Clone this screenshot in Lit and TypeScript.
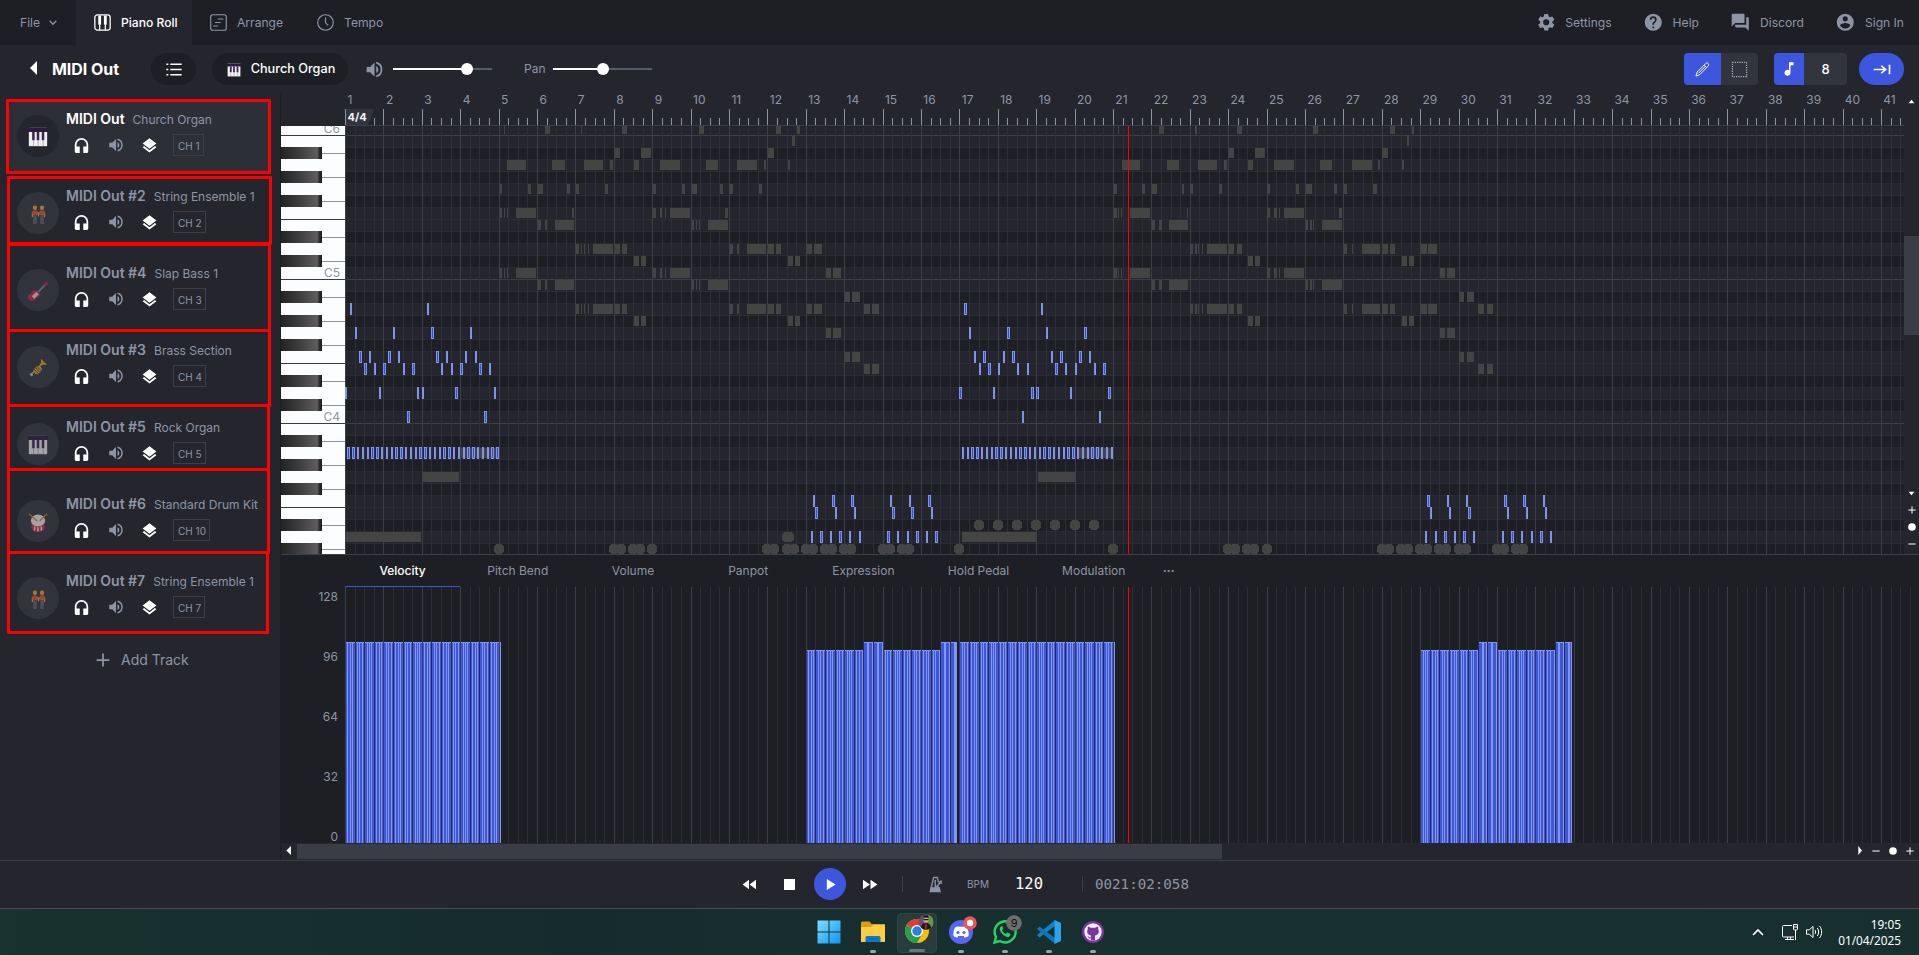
import { LitElement, html, css, svg } from "lit";
import { customElement } from "lit/decorators.js";

const BAR = 38.4;
const BEAT = 9.6;
const EIGHTH = 4.8;
const ROW = 12;
const BLACK_ROWS = [1, 3, 5, 8, 10];
const r = Math.round;

type Span = [number, number];

// Notes of the other tracks, [start, end] in units of 1/2.8 px, by key row.
const PHRASE_A: Span[] = [[447, 454], [459, 462], [467, 470], [493, 549], [875, 885], [896, 902], [910, 913], [924, 980]];
const PHRASE_B: Span[] = [[553, 563], [574, 580], [602, 655], [985, 991], [996, 1000], [1005, 1008], [1030, 1086]];
const PHRASE_C: Span[] = [
  [660, 669], [675, 678], [683, 686], [694, 697], [708, 764], [769, 784], [790, 804],
  [1090, 1100], [1112, 1117], [1140, 1193], [1198, 1215], [1221, 1235], [1307, 1322], [1327, 1350],
];
const PHRASE_D: Span[] = [[823, 837], [843, 857], [1254, 1268], [1274, 1288]];
const GHOSTS: [number, Span[]][] = [
  [-1, [[459, 462], [574, 588], [675, 678], [790, 804], [1005, 1019], [1221, 1235], [1280, 1288]]],
  [0, [[1266, 1274]]],
  [1, [[769, 784], [843, 871], [1198, 1215]]],
  [2, [[468, 521], [594, 630], [683, 736], [756, 764], [823, 837], [896, 952], [1025, 1058], [1112, 1168], [1187, 1193], [1254, 1260]]],
  [4, [[447, 454], [526, 535], [553, 568], [636, 644], [660, 669], [742, 750], [875, 885], [957, 966], [985, 1000], [1064, 1072], [1090, 1100], [1173, 1182]]],
  [6, [...PHRASE_A, [650, 655], [1078, 1086]]],
  [7, PHRASE_B],
  [9, PHRASE_C],
  [10, PHRASE_D],
  [11, [...PHRASE_A, [1361, 1375], [1380, 1403]]],
  [12, PHRASE_B],
  [13, [[1413, 1428], [1434, 1456]]],
  [14, [...PHRASE_C, [1467, 1484], [1490, 1509]]],
  [15, PHRASE_D],
  [16, [[1361, 1375], [1380, 1403]]],
  [18, [[1413, 1428], [1434, 1456]]],
  [19, [[1467, 1484], [1490, 1509]]],
];
const LONG_GHOSTS: [number, number, number][] = [
  [33, 1, 76], [28, 78, 114], [26, 116, 152],
  [33, 617, 691], [28, 693, 730], [26, 732, 768],
];

// Notes of the selected track, start in sixteenths (4.8 px), by key row.
const MELODY: [number, number[]][] = [
  [14, [1, 17]],
  [16, [2, 10, 18, 26]],
  [18, [3, 5, 9, 11, 19, 21, 25, 27]],
  [19, [4, 6, 8, 12, 14, 20, 22, 24, 28, 30]],
  [21, [0, 7, 15, 16, 23, 31]],
  [23, [13, 29]],
  [26, Array.from({ length: 32 }, (_, i) => i + 0.5)],
  [30, [97.5, 101.5, 105.5, 113.5, 117.5, 121.5]],
  [31, [98, 102, 106, 114, 118, 122]],
  [33, [97, 99, 101, 103, 105, 107, 113, 115, 117, 119, 121, 123]],
];

const DRUM_PAIRS = [7, 7.5, 11, 11.5, 12, 12.5, 13, 14, 14.5];
const WIDTH = 1574;

const lines = (top: number, h: number, w: number) => {
  const out = [];
  for (let i = 0; i * BEAT < w; i++)
    out.push(svg`<rect x=${r(i * BEAT)} y=${top} width="1" height=${h} fill=${i % 4 ? "#2d2f37" : "#3c3f48"}/>`);
  return out;
};

const P: Record<string, unknown> = {
  file: svg`<path d="M4 8l8 8 8-8" fill="none" stroke="currentColor" stroke-width="3"/>`,
  piano: svg`<g fill="none" stroke="currentColor" stroke-width="1.8"><rect x="1.2" y="1.2" width="21.6" height="21.6" rx="3.6"/><path d="M8 15v8M16 15v8"/></g><path d="M6 2h4v13H6zM14 2h4v13h-4z" fill="currentColor"/>`,
  arrange: svg`<g fill="none" stroke="currentColor" stroke-width="1.6"><rect x="1" y="1" width="22" height="22" rx="3"/><path d="M11 7h8M7 12h8M4.500 17h7"/></g>`,
  clock: svg`<g fill="none" stroke="currentColor" stroke-width="1.6"><circle cx="12" cy="12" r="11"/><path d="M12 5v7.500l4 3.500"/></g>`,
  gear: svg`<path fill="currentColor" d="M19.140 12.940c.040-.3.060-.61.060-.94s-.020-.64-.07-.94l2.030-1.580a.49.49 0 0 0 .12-.61l-1.920-3.320a.49.49 0 0 0-.59-.22l-2.390.96a7 7 0 0 0-1.620-.94l-.36-2.540a.48.48 0 0 0-.48-.41h-3.840c-.24 0-.43.17-.47.41l-.36 2.540c-.59.24-1.130.57-1.620.94l-2.390-.96a.48.48 0 0 0-.59.22L2.740 8.870c-.12.21-.08.47.12.61l2.030 1.580c-.05.3-.09.63-.09.94s.020.64.07.94l-2.030 1.580a.49.49 0 0 0-.12.61l1.920 3.320c.12.22.37.29.59.22l2.390-.96c.5.38 1.030.7 1.620.94l.36 2.540c.05.24.24.41.48.41h3.840c.24 0 .44-.17.47-.41l.36-2.540a7 7 0 0 0 1.620-.94l2.390.96c.22.08.47 0 .59-.22l1.920-3.320a.48.48 0 0 0-.12-.61zM12 15.600a3.600 3.600 0 1 1 0-7.200 3.600 3.600 0 0 1 0 7.200z"/>`,
  help: svg`<path fill="currentColor" d="M12 2a10 10 0 1 0 0 20 10 10 0 0 0 0-20zm1 17h-2v-2h2zm2.070-7.750-.9.920C13.450 12.900 13 13.500 13 15h-2v-.5c0-1.100.45-2.100 1.170-2.830l1.240-1.260c.37-.36.59-.86.59-1.410a2 2 0 1 0-4 0H8a4 4 0 1 1 8 0c0 .88-.36 1.680-.93 2.250z"/>`,
  chat: svg`<path fill="currentColor" d="M21 6h-2v9H6v2c0 .55.45 1 1 1h11l4 4V7c0-.55-.45-1-1-1zm-4 6V3c0-.55-.45-1-1-1H3c-.55 0-1 .45-1 1v14l4-4h10c.55 0 1-.45 1-1z"/>`,
  user: svg`<path fill="currentColor" d="M12 2a10 10 0 1 0 0 20 10 10 0 0 0 0-20zm0 3a3 3 0 1 1 0 6 3 3 0 0 1 0-6zm0 14.200a7.200 7.200 0 0 1-6-3.220c.030-1.990 4-3.080 6-3.080s5.970 1.090 6 3.080a7.200 7.200 0 0 1-6 3.220z"/>`,
  list: svg`<path d="M6.500 4.500h17v2h-17zM6.500 11.500h17v2h-17zM6.500 18.500h17v2h-17zM.5 4.500h3v2h-3zM.5 11.500h3v2h-3zM.5 18.500h3v2h-3z" fill="currentColor"/>`,
  volume: svg`<path fill="currentColor" d="M3 9v6h4l5 5V4L7 9zm13.500 3A4.500 4.500 0 0 0 14 7.970v8.050c1.480-.73 2.500-2.250 2.500-4.020zM14 3.230v2.060a7 7 0 0 1 0 13.420v2.060a9 9 0 0 0 0-17.540z"/>`,
  phones: svg`<path fill="currentColor" d="M12 1.500a9.500 9.500 0 0 0-9.500 9.500v9c0 1.400 1.100 2.500 2.500 2.500h4.500V13.500h-4.500V11a7 7 0 0 1 14 0v2.500h-4.500v9H19c1.400 0 2.500-1.100 2.500-2.500v-9A9.500 9.500 0 0 0 12 1.500z"/>`,
  layers: svg`<path fill="currentColor" d="M12 19.500L3.300 12.800 1 14.600l11 8.600 11-8.600-2.300-1.800zM12 17l11-8.400L12 .2 1 8.600z"/>`,
  pencil: svg`<g fill="none" stroke="currentColor" stroke-width="1.500" stroke-linejoin="round"><path d="M1.500 22.500l2-6.500L17 2.500c1.500-1.500 3-1.300 4 0s1.300 2.500 0 4L8 20z"/><path d="M14.500 5l4.500 4.500M5.500 18L17 6.500"/></g>`,
  marquee: svg`<rect x="2" y="2" width="20" height="20" fill="none" stroke="#a9afbc" stroke-width="1.700" stroke-dasharray="1.700 1.630"/>`,
  note: svg`<path fill="currentColor" d="M12 3v10.550A4 4 0 1 0 14 17V7h4V3z"/>`,
  jump: svg`<path d="M1 12h16M11 6l6 6-6 6M22 4.500v15" fill="none" stroke="currentColor" stroke-width="2.200"/>`,
  plus: svg`<path d="M12 1v22M1 12h22" fill="none" stroke="currentColor" stroke-width="3"/>`,
  minus: svg`<path d="M1 12h22" fill="none" stroke="currentColor" stroke-width="3"/>`,
  dot: svg`<circle cx="12" cy="12" r="11.500" fill="currentColor"/>`,
  up: svg`<path d="M2 18L12 6l10 12z" fill="currentColor"/>`,
  down: svg`<path d="M2 6l10 12L22 6z" fill="currentColor"/>`,
  left: svg`<path d="M18 0L4 12l14 12z" fill="currentColor"/>`,
  right: svg`<path d="M7 0l11 12L7 24z" fill="currentColor"/>`,
  rew: svg`<path d="M12 4.500v15L1 12zM24 4.500v15L13 12z" fill="currentColor"/>`,
  ff: svg`<path d="M0 4.500v15L11 12zM12 4.500v15L23 12z" fill="currentColor"/>`,
  stop: svg`<path d="M0 0h24v24H0z" fill="currentColor"/>`,
  play: svg`<path d="M4 0v24l19-12z" fill="currentColor"/>`,
  metro: svg`<path d="M9 2h6l1.800 7M9 2L4.500 19M16 14.500l1.500 5M11.500 17V7l.5-1.500M12 17L22 6.500M18.500 7l3.500 4" fill="none" stroke="currentColor" stroke-width="2.200"/><path d="M4 16h15l1.600 7H2.400z" fill="currentColor"/>`,
  keys: svg`<path d="M1 1h22v22H1z" fill="#f1eef0"/><path d="M0 1h24v5H0z" fill="#2f1b40"/><path d="M5 6h3v10H5zM10.500 6h3v10h-3zM16.500 6h3v10h-3z" fill="#3b2450"/><path d="M6.200 16h.8v7h-.8zM11.700 16h.8v7h-.8zM17.700 16h.8v7h-.8z" fill="#9a93a0"/>`,
  people: svg`<g fill="#f2a33a"><circle cx="7" cy="3.500" r="3"/><circle cx="17" cy="3.500" r="3"/><path d="M2.500 9h2v6h-2zM19.500 9h2v6h-2zM9.500 9L12 15.500 14.500 9z"/></g><path d="M3.500 7h7v6h-7zM13.500 7h7v6h-7z" fill="#e0532c"/><path d="M4.500 13h5v11h-5zM14.500 13h5v11h-5z" fill="#5c6470"/>`,
  guitar: svg`<path d="M10 15L21 3" stroke="#7a7f98" stroke-width="2.400"/><path d="M18 3.500L21.500-.5 25 2l-3.500 3.500z" fill="#c2204f"/><path d="M1.500 22.500c-3-3-1.500-7 2-7 .5-4 4.500-6.500 7-4.500l3 3c2 2.500 0 5.500-4 6.500-1 4-5 4.500-8 2z" fill="#d3204d"/><path d="M4.500 18l5.500-5.500 3 3-5.500 5.500z" fill="#e2d6dd"/>`,
  trumpet: svg`<g transform="rotate(-45 12 12)"><path d="M-1 10.500h18c3 0 5-1.500 7-4.500h1v11.500h-1c-2-3-4-4.500-7-4.500H-1z" fill="#e5a02d"/><rect x="3" y="9" width="13" height="9.500" rx="4" fill="#e5a02d"/><path d="M6.500 7v12M9.500 7v12M12.500 7v12" stroke="#5d4423" stroke-width="1.300"/><path d="M-3.500 9.500h3v5h-3z" fill="#c9c4bd"/></g>`,
  drum: svg`<path d="M4 9h16v9c0 4-3 6-8 6s-8-2-8-6z" fill="#cf2147"/><path d="M7 17h2v5H7zM11 18h2v5h-2zM15 17h2v5h-2z" fill="#f1dede"/><ellipse cx="12" cy="9.500" rx="8.500" ry="7.500" fill="#f2ece6"/><path d="M1 1l10 9M23 1l-9 9" stroke="#c9823a" stroke-width="1.600"/>`,
};

const icon = (name: string, w: number, h = w) =>
  html`<svg class="ic" width=${w} height=${h} viewBox="0 0 24 24" preserveAspectRatio="none">${P[name]}</svg>`;

const TRACKS = [
  { name: "MIDI Out", inst: "Church Organ", ch: 1, pic: "keys", on: true },
  { name: "MIDI Out #2", inst: "String Ensemble 1", ch: 2, pic: "people" },
  { name: "MIDI Out #4", inst: "Slap Bass 1", ch: 3, pic: "guitar" },
  { name: "MIDI Out #3", inst: "Brass Section", ch: 4, pic: "trumpet" },
  { name: "MIDI Out #5", inst: "Rock Organ", ch: 5, pic: "keys" },
  { name: "MIDI Out #6", inst: "Standard Drum Kit", ch: 10, pic: "drum" },
  { name: "MIDI Out #7", inst: "String Ensemble 1", ch: 7, pic: "people" },
];

// Annotation frames over the track list: x, y, width, height.
const FRAMES = [
  [6, 99, 265, 75], [7, 176, 265, 69], [7, 243, 264, 89], [7, 329, 264, 78],
  [7, 404, 263, 67], [7, 468, 263, 86], [7, 551, 262, 83],
];

@customElement("app-root")
export class AppRoot extends LitElement {
  static styles = css`
    :host { display: flex; flex-direction: column; width: 1919px; height: 955px; overflow: hidden; position: relative;
      background: #25262d; color: #8d95a5; font: 12px/16px Inter, "Open Sans", sans-serif; }
    * { box-sizing: border-box; }
    .ic { display: block; flex: none; overflow: visible; }
    .row { display: flex; align-items: center; }
    .white { color: #fff; }
    .top { height: 45px; flex: none; background: #1e1f24; font-size: 12.100px; }
    .file { width: 76px; padding-left: 20px; gap: 8px; }
    .tab { height: 45px; gap: 10px; padding-left: 18px; margin-right: 16px; }
    .tab.on { background: #25262d; color: #fff; width: 116px; font-weight: 500; margin-right: 0; }
    .tab b { font-weight: inherit; }
    .links { margin-left: auto; padding-right: 15px; gap: 31.500px; }
    .links .row { gap: 9px; }
    .tools { height: 48px; flex: none; padding-left: 28px; }
    .back { width: 24px; }
    .back .ic { margin-top: -3px; }
    .ttl { font-size: 16px; font-weight: 700; width: 99px; letter-spacing: -0.050px; }
    .pill { height: 32px; border-radius: 16px; background: #1e1f24; justify-content: center; color: #fff; }
    .listb { width: 45px; margin-right: 16px; }
    .inst { width: 136px; gap: 10px; font-size: 12.700px; margin-right: 16px; padding-left: 2px; font-weight: 500; }
    .inst .ic { margin-top: 2px; }
    .slider { width: 99px; height: 12px; }
    .fill { height: 2px; background: #fff; }
    .knob { width: 12px; height: 12px; border-radius: 50%; background: #fff; margin: 0 -6px; z-index: 1; }
    .rest { height: 2px; flex: 1; background: #535b6d; }
    .pan { margin: 0 8px 0 32px; width: 21px; font-size: 12px; }
    .edit { margin-left: auto; padding-right: 15px; }
    .sq { height: 32px; justify-content: center; background: #32353e; }
    .blue { background: #3c57dd; color: #fff; }
    .main { display: flex; flex: none; height: 767px; }
    .side { width: 281px; padding: 9px 10px 0 9px; border-right: 1px solid #1e1f24; flex: none; }
    .track { display: flex; height: 69px; margin-bottom: 8px; padding: 0 0 0 8px; border: 1px solid transparent; border-radius: 6px; }
    .track.on { background: #2d2f37; border-color: #31353d; }
    .disc { width: 42px; height: 42px; border-radius: 50%; background: #31343c; margin: 12px 7px 0 -1px; display: flex; align-items: center; justify-content: center; }
    .disc .ic { opacity: .6; margin-top: 2px; }
    .on .disc { background: #25262d; }
    .on .disc .ic { opacity: 1; }
    .info { flex: 1; white-space: nowrap; padding-top: 8px; }
    .nm { font-size: 14px; font-weight: 600; margin-right: 8px; }
    .on .nm { color: #fff; }
    .in { font-size: 12px; }
    .ctl { margin-top: 6px; height: 22px; padding-left: 7px; }
    .ctl .ic { margin-right: 17px; }
    .ch { height: 22px; border: 1px solid #3a3f4a; font-size: 10px; padding: 3px 3px 0 4px; line-height: 16px; margin-left: -1px; }
    .add { padding: 11px 0 0 87px; gap: 11px; font-size: 14px; }
    .right { flex: 1; min-width: 0; }
    .up { display: flex; height: 461px; }
    .keys { width: 64px; flex: none; padding-top: 33px; }
    .cols { width: 1559px; flex: none; overflow: hidden; }
    .ruler { height: 33px; border-bottom: 1px solid #3a3f4a; overflow: hidden; }
    .nums { display: flex; height: 16px; }
    .nums span { width: 38.400px; flex: none; padding-left: 2.500px; font-size: 12px; line-height: 14px; }
    .ticks { display: block; }
    .roll, .kb, .vel { display: block; }
    .vs { width: 15px; display: flex; flex-direction: column; align-items: center; padding-top: 4.500px; height: 461px; color: #fff; }
    .vthumb { width: 15px; height: 99px; background: #3a3d45; margin: 131.500px 0 155px; flex: none; }
    .low { background: #1e1f24; border-top: 1px solid #3a3f4a; height: 289px; }
    .tabs { display: flex; height: 32px; padding-left: 64px; }
    .tabs div { width: 115.200px; text-align: center; line-height: 32px; border-bottom: 1px solid transparent; }
    .tabs .sel { color: #fff; border-color: #3c57dd; font-weight: 500; }
    .tabs .more { width: 30px; font-size: 6.500px; padding-left: 5px; letter-spacing: 0.300px; }
    .velrow { display: flex; }
    .axis { width: 64px; padding: 2px 7px 0 0; text-align: right; height: 256px; }
    .axis div { height: 60px; }
    .axis span { display: block; height: 14px; }
    .hs { height: 17px; display: flex; align-items: center; color: #fff; background: #25262d; padding: 0 0 2px 4px; }
    .hthumb { width: 925px; height: 15px; background: #3a3d45; margin: 2px 634px 0 4px; }
    .bar { height: 48px; flex: none; border-top: 1px solid #3a3f4a; justify-content: flex-start; padding: 0 0 1px 742px; color: #fff; }
    .playb { width: 32px; height: 32px; border-radius: 50%; justify-content: center; margin: 0 17px; }
    .sep { width: 1px; height: 16px; background: #3a3f4a; }
    .dim { color: #8d95a5; }
    .mono { font-family: "DejaVu Sans Mono", monospace; }
    .task { flex: 1; background: linear-gradient(90deg, #17322f, #162b2d 30%, #182f30 50%, #17302f); border-top: 1px solid #41504f; padding-left: 809px; color: #fff; }
    .app { width: 40px; height: 40px; margin: 1px 4px 0 0; display: flex; flex-direction: column; align-items: center; justify-content: flex-end; border-radius: 4px; }
    .app.cur { background: #263c3d; border: 1px solid #304646; }
    .app i { width: 6px; height: 3px; border-radius: 2px; background: #9aa5a5; margin-top: 3.500px; }
    .app.cur i { width: 16px; background: #6d7677; }
    .app i.none { background: none; }
    .tray { margin-left: auto; padding-right: 18px; gap: 8px; }
    .clk { font: 11.800px/16px "Noto Sans", "Open Sans", sans-serif; text-align: right; width: 70px; white-space: nowrap; }
    .frame { position: absolute; border: 3px solid #f00; border-radius: 1px; }
    text { font-family: Inter, sans-serif; }
  `;

  private ticks() {
    const out = [];
    for (let i = 0; i * BEAT < 1559; i++) {
      const h = i % 4 ? 7 : 16;
      out.push(svg`<rect x=${r(i * BEAT)} y=${16 - h} width="1" height=${h} fill="#8d95a5"/>`);
    }
    return html`<svg class="ticks" width="1559" height="16">${out}
      ${svg`<path d="M1 0h28l-6 16H1z" fill="#32353e"/><text x="2.500" y="12.300" font-size="11" font-weight="700" fill="#f2f3f5">4/4</text>`}</svg>`;
  }

  private keyboard() {
    const out = [];
    for (let k = -1; k < 35; k++) {
      const y = 9 + k * ROW;
      const n = (k + 12) % 12;
      if (BLACK_ROWS.includes(n))
        out.push(svg`<rect x="41" y=${y + 6} width="23" height="1" fill="#8f929b"/><rect x="0" y=${y} width="41" height="12" fill="url(#bk)"/>`);
      if (n === 6 || n === 11)
        out.push(svg`<rect x="0" y=${y + 12} width="64" height="1" fill="#3a3b42"/>`);
      if (n === 11)
        out.push(svg`<text x="59" y=${y + 10} font-size="12" text-anchor="end" fill="#8d95a5">C${k < 0 ? 6 : k < 12 ? 5 : 4}</text>`);
    }
    return html`<svg class="kb" width="64" height="428"><defs><linearGradient id="bk" gradientUnits="userSpaceOnUse" x1="0" y1="0" x2="41" y2="0"><stop offset="0" stop-color="#222"/><stop offset="0.400" stop-color="#3c3b3b"/><stop offset="0.880" stop-color="#5e5c5c"/><stop offset="0.940" stop-color="#2c2b2c"/><stop offset="1" stop-color="#1c1c1e"/></linearGradient></defs>
      <rect width="64" height="428" fill="#fcfdff"/>${out}</svg>`;
  }

  private roll() {
    const g = [];
    const top = (k: number) => 9 + k * ROW;
    for (let k = -1; k < 35; k++) {
      if (BLACK_ROWS.includes((k + 12) % 12)) g.push(svg`<rect x="0" y=${top(k)} width="1559" height="12" fill="#1e1f24"/>`);
    }
    for (let k = 0; k < 35; k++) {
      g.push(svg`<rect x="0" y=${top(k)} width="1559" height="1" fill=${k % 12 ? "#2a2b32" : "#3a3f4a"}/>`);
    }
    g.push(...lines(0, 428, 1559));
    const ghost = (k: number, a: number, b: number) =>
      g.push(svg`<rect x=${a} y=${top(k) + 1} width=${Math.max(1, b - a)} height="10" fill="#444"/>`);
    for (const off of [0, 16 * BAR])
      for (const [k, list] of GHOSTS)
        for (const [a, b] of list) ghost(k, r(a / 2.8 - 5 + off), r(b / 2.8 - 5 + off));
    for (const [k, a, b] of LONG_GHOSTS) ghost(k, a, b);
    const drum = (k: number, x: number) => {
      const c = r(x);
      const y = top(k);
      g.push(svg`<path d="M${c - 2.500} ${y + 1}h5l2.500 2.500v5l-2.500 2.500h-5l-2.500-2.500v-5z" fill="#444"/>`);
    };
    for (const off of [0, 16 * BAR]) {
      for (const b of DRUM_PAIRS) {
        drum(34, b * BAR + off);
        drum(34, b * BAR + 7 + off);
      }
      drum(34, 8 * BAR + off);
      drum(34, 4 * BAR + off);
    }
    drum(34, 16 * BAR);
    drum(33, 11.5 * BAR);
    drum(33, 11.5 * BAR + 2);
    for (let i = 0; i < 7; i++) drum(32, 132 * EIGHTH + i * 19.2);
    for (const [k, list] of MELODY)
      for (const off of [0, 128])
        for (const s of list) {
          const a = r((s + off) * EIGHTH);
          const b = r((s + off) * EIGHTH + 2.4);
          g.push(svg`<rect x=${a} y=${top(k)} width=${b - a} height="12" fill="#8093ea"/>`);
          if (b - a > 2) g.push(svg`<rect x=${a + 1} y=${top(k) + 1} width="1" height="10" fill="#3550d0"/>`);
        }
    g.push(svg`<rect x="783" y="0" width="1" height="428" fill="#f00"/>`);
    return html`<svg class="roll" width="1559" height="428" shape-rendering="crispEdges">${g}</svg>`;
  }

  private velocity() {
    const g: unknown[] = [];
    const bar = (x0: number, x1: number, y: number) => {
      const a = r(x0);
      const b = r(x1);
      g.push(svg`<rect x=${a} y=${y} width=${b - a} height=${256 - y} fill="#8296ee"/><rect x=${a + 1} y=${y + 1} width=${b - a - 2} height=${255 - y} fill="#3c57dd"/>`);
    };
    const dense = (start: number, count: number, y: number) => {
      for (let i = 0; i < count; i++) bar(start + i * 2.4, start + i * 2.4 + 4.8, y);
    };
    const wide = (start: number, count: number) => {
      for (let i = 0; i < count; i++) bar(start + i * 4.8, start + i * 4.8 + 4.8, 55);
    };
    dense(0, 64, 55);
    for (const off of [12 * BAR, 28 * BAR]) {
      dense(off, 23, 63);
      wide(off + 6 * BEAT, 4);
      dense(off + 8 * BEAT, 23, 63);
      wide(off + 14 * BEAT, 3);
      bar(off + 15.5 * BEAT, off + 15.5 * BEAT + 2.8, 55);
    }
    dense(16 * BAR, 64, 55);
    return html`<svg class="vel" width=${WIDTH} height="256" shape-rendering="crispEdges">${g}${lines(0, 256, WIDTH)}
      ${svg`<rect x="783" y="0" width="1" height="256" fill="#f00"/>`}</svg>`;
  }

  private taskbar() {
    const s = (inner: unknown) => html`<svg class="ic" width="28" height="28" viewBox="0 0 28 28">${inner}</svg>`;
    return html`<div class="task row">
      <div class="app">${s(svg`<defs><linearGradient id="wn" x2="1" y2="1"><stop stop-color="#7fe0fd"/><stop offset="1" stop-color="#0a93f5"/></linearGradient></defs><path d="M2.500 2.500h11v11h-11zM14.500 2.500h11v11h-11zM2.500 14.500h11v11h-11zM14.500 14.500h11v11h-11z" fill="url(#wn)"/>`)}<i class="none"></i></div>
      <div class="app">${s(svg`<path d="M2 5a1.500 1.500 0 0 1 1.500-1.500h7l2 2.500H26v4H2z" fill="#dc9d12"/><path d="M2 9h10l2.500-2H25a1 1 0 0 1 1 1v16H2z" fill="#fdce45"/><path d="M6.500 24v-4.500a1.500 1.500 0 0 1 1.500-1.500h12a1.500 1.500 0 0 1 1.500 1.500V24z" fill="#1277c4"/><path d="M9.500 20.500h9v1h-9z" fill="#0b5fa0"/>`)}<i></i></div>
      <div class="app cur">${s(svg`<circle cx="14" cy="14" r="12" fill="#fbbf12"/><path d="M14 14L3.600 8A12 12 0 0 1 24.400 8z" fill="#e33b2e"/><path d="M14 14L3.600 8A12 12 0 0 0 14 26l5.200-9z" fill="#2a9f4b"/><circle cx="14" cy="14" r="6" fill="#fff"/><circle cx="14" cy="14" r="4.700" fill="#2b7de9"/><circle cx="23" cy="5" r="7.500" fill="#6b4f73"/><path d="M25 -2.200a7.500 7.500 0 0 1 0 14.400z" fill="#5c9a3c"/><circle cx="23" cy="3" r="2.600" fill="#d9a58c"/><path d="M20.500 -1.500h5v2h-5zM20.500 2h5v1.200h-5zM18 10.800c0-6.500 10-6.500 10 0-2.500 2.500-7.500 2.500-10 0z" fill="#201820"/><path d="M22.300 6.500h1.400v5.500h-1.400z" fill="#d22"/>`)}<i></i></div>
      <div class="app">${s(svg`<circle cx="14" cy="14" r="12" fill="#5865f2"/><path d="M8 9.500c2-1.200 3.500-1.200 4-.7h4c.5-.5 2-.5 4 .7 1.500 3 2 6 1.500 8.500-1.500 1-3 1.600-4 1.500l-.8-1.500h-5.400l-.8 1.500c-1 .1-2.500-.5-4-1.500-.5-2.500 0-5.500 1.500-8.500z" fill="#fff"/><circle cx="11" cy="14.500" r="1.600" fill="#5865f2"/><circle cx="17" cy="14.500" r="1.600" fill="#5865f2"/><circle cx="23" cy="5" r="6.800" fill="#f15351"/><circle cx="23" cy="5" r="3.200" fill="#fff"/>`)}<i></i></div>
      <div class="app">${s(svg`<path d="M3.500 24.500l1.500-5.500a10.500 10.500 0 1 1 4 4z" fill="#17302f" stroke="#25d366" stroke-width="2.400"/><path d="M10 8.500c-2.500 2-1 5 1.500 7.500s5.500 4 7.500 2l.5-2-3-1.500-1.500 1.500c-2-.7-3.300-2.200-4-4l1.200-1.300L11.500 8z" fill="#25d366"/><circle cx="23" cy="5" r="7.800" fill="#6d6d6d"/><text x="19.700" y="9" font-size="11" fill="#111">9</text>`)}<i></i></div>
      <div class="app">${s(svg`<path d="M20 2L2 17l2.500 2.500L20 8z" fill="#1180c8"/><path d="M20 26L2 11l2.500-2.500L20 20z" fill="#1072b8"/><path d="M19.500 2l6.500 3v18l-6.500 3z" fill="#2aa3ef"/>`)}<i></i></div>
      <div class="app">${s(svg`<circle cx="14" cy="14" r="11" fill="#7b35a0"/><circle cx="14" cy="14" r="8.700" fill="#f4eef8"/><path d="M9 8.500l3 1.200h4l3-1.200.3 3c1.500 3-.3 5.500-3.300 6v5h-4v-2c-2 .5-2.500-1-3.300-2 1.200 0 1.800 1 3.300.7v-1.700c-3-.5-4.800-3-3.300-6z" fill="#7b35a0"/>`)}<i></i></div>
      <div class="tray row">
        <svg class="ic" width="12" height="12" viewBox="0 0 12 12"><path d="M1 9l5-5 5 5" fill="none" stroke="#fff" stroke-width="1.600"/></svg>
        <svg class="ic" width="16" height="17" viewBox="0 0 16 17" style="margin-left:10px"><path d="M10 1.500H1.500a1 1 0 0 0-1 1v9.500a1 1 0 0 0 1 1H12M3 15.500h9M5.500 13v2.500M8.500 13v2.500M11.500.5h4V5l-.8 1h-2.400l-.8-1zM11.500 3h4M13.500 6v10" fill="none" stroke="#fff"/></svg>
        <svg class="ic" width="17" height="14" viewBox="0 0 17 14"><path d="M.5 4.800v4.400h2.800L7 12.500v-11L3.300 4.800zM9 5c.8 1 .8 3 0 4M11.300 3c1.800 2 1.800 6 0 8M13.500 1c2.800 3 2.800 9 0 12" fill="none" stroke="#fff"/></svg>
        <div class="clk">19:05<br>01/04/2025</div>
      </div>
    </div>`;
  }

  render() {
    return html`
      <div class="top row">
        <div class="file row"><span>File</span>${icon("file", 10, 11)}</div>
        <div class="tab on row">${icon("piano", 17)}<b>Piano Roll</b></div>
        <div class="tab row">${icon("arrange", 17)}<span>Arrange</span></div>
        <div class="tab row">${icon("clock", 17)}<span>Tempo</span></div>
        <div class="links row">
          <div class="row">${icon("gear", 20.5)}<span>Settings</span></div>
          <div class="row">${icon("help", 20.5)}<span>Help</span></div>
          <div class="row">${icon("chat", 20.5)}<span>Discord</span></div>
          <div class="row">${icon("user", 20.5)}<span>Sign In</span></div>
        </div>
      </div>
      <div class="tools row">
        <div class="back white">${icon("left", 12, 14)}</div>
        <div class="ttl white">MIDI Out</div>
        <div class="pill listb row">${icon("list", 16, 18)}</div>
        <div class="pill inst row">${icon("keys", 14)}<span>Church Organ</span></div>
        ${icon("volume", 21)}
        <div class="slider row" style="margin-left:8px"><div class="fill" style="width:74px"></div><div class="knob"></div><div class="rest"></div></div>
        <div class="pan">Pan</div>
        <div class="slider row"><div class="fill" style="width:50px"></div><div class="knob"></div><div class="rest"></div></div>
        <div class="edit row">
          <div class="sq row blue" style="width:37px;border-radius:4px 0 0 4px">${icon("pencil", 15)}</div>
          <div class="sq row" style="width:37px;border-radius:0 4px 4px 0;margin-right:16px">${icon("marquee", 17)}</div>
          <div class="sq row blue" style="width:30px;border-radius:4px 0 0 4px">${icon("note", 18)}</div>
          <div class="sq row white" style="width:43px;border-radius:0 4px 4px 0;margin-right:12px;font-weight:500;font-size:13px">8</div>
          <div class="pill blue row" style="width:45px">${icon("jump", 18, 15)}</div>
        </div>
      </div>
      <div class="main">
        <div class="side">
          ${TRACKS.map((t) => html`<div class="track ${t.on ? "on" : ""}">
            <div class="disc">${icon(t.pic, t.pic === "people" ? 17 : t.pic === "trumpet" ? 16 : 20, t.pic === "keys" ? 20 : t.pic === "trumpet" ? 16 : 19)}</div>
            <div class="info">
              <span class="nm">${t.name}</span><span class="in">${t.inst}</span>
              <div class="ctl row"><span class="white">${icon("phones", 17)}</span>${icon("volume", 18)}<span class="white">${icon("layers", 15)}</span><span class="ch">CH ${t.ch}</span></div>
            </div></div>`)}
          <div class="add row">${icon("plus", 14)}<span>Add Track</span></div>
        </div>
        <div class="right">
          <div class="up">
            <div class="keys">${this.keyboard()}</div>
            <div class="cols">
              <div class="ruler"><div class="nums">${Array.from({ length: 41 }, (_, i) => html`<span>${i + 1}</span>`)}</div>${this.ticks()}</div>
              ${this.roll()}
            </div>
            <div class="vs">${icon("up", 7)}<div class="vthumb"></div>${icon("down", 7)}<div style="height:9px"></div>${icon("plus", 8)}<div style="height:9px"></div>${icon("dot", 8)}<div style="height:9px"></div>${icon("minus", 8)}</div>
          </div>
          <div class="low">
            <div class="tabs"><div class="sel">Velocity</div>${["Pitch Bend", "Volume", "Panpot", "Expression", "Hold Pedal", "Modulation"].map((t) => html`<div>${t}</div>`)}<div class="more">•••</div></div>
            <div class="velrow"><div class="axis">${[128, 96, 64, 32].map((v) => html`<div>${v}</div>`)}<span>0</span></div>${this.velocity()}</div>
          </div>
          <div class="hs">${icon("left", 8, 9)}<div class="hthumb"></div>${icon("right", 8, 9)}<div style="width:8px"></div>${icon("minus", 8)}<div style="width:9px"></div>${icon("dot", 8)}<div style="width:9px"></div>${icon("plus", 8)}</div>
        </div>
      </div>
      <div class="bar row">
        ${icon("rew", 14, 15)}<div style="width:28px"></div>${icon("stop", 11)}
        <div class="playb blue row" style="margin:0 17px 0 19px">${icon("play", 11)}</div>
        ${icon("ff", 15, 15)}
        <div class="sep" style="margin:0 25px 0 24px"></div>
        <span class="dim">${icon("metro", 15, 17)}</span>
        <span class="dim" style="font-size:10px;margin-left:24px;width:48px">BPM</span>
        <span class="mono" style="font-size:15.500px;width:67px">120</span>
        <div class="sep" style="margin-right:12px"></div>
        <span class="mono dim" style="font-size:14.200px">0021:02:058</span>
      </div>
      ${this.taskbar()}
      ${FRAMES.map(([x, y, w, h]) => html`<div class="frame" style="left:${x}px;top:${y}px;width:${w}px;height:${h}px"></div>`)}
    `;
  }
}
